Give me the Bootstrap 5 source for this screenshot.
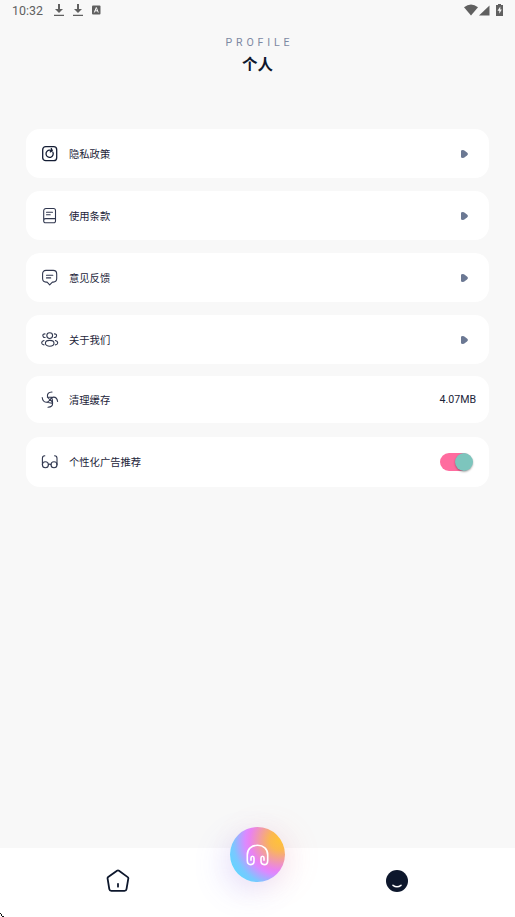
<!DOCTYPE html>
<html lang="zh-CN">
<head>
<meta charset="utf-8">
<meta name="viewport" content="width=device-width, initial-scale=1">
<title>个人</title>
<link href="https://cdn.jsdelivr.net/npm/bootstrap@5.3.0/dist/css/bootstrap.min.css" rel="stylesheet">
<style>
body{background:#f8f8f8;color:#0d172c;font-family:Roboto,"Noto Sans CJK SC",sans-serif;height:917px;overflow:hidden}
svg{display:block;flex:none}
.line-icon{width:18px;height:18px;fill:none;stroke:#30374f;stroke-width:1.1;stroke-linecap:round;stroke-linejoin:round;margin-right:10px}
.line-icon.strong{stroke:#141d34;stroke-width:1.3}
.status-bar{height:22px;padding:0 11px 2px 12px;color:#606060}
.glyph-gap{margin-left:9px}
.battery{margin:0 1px 0 6px}
.signal{margin-left:1px}
.clock{font-size:12.4px;line-height:20px;width:42px;letter-spacing:.05px;padding-top:1px}
.page-head{height:107px;padding-top:14px}
.eyebrow{font-size:10.6px;line-height:13px;letter-spacing:3.85px;color:#7d89a3;padding-left:4px}
.page-title{font-size:15.5px;line-height:22px;font-weight:700;margin-top:5px}
.setting{height:49px;border-radius:14px;background:#fff;padding:0 13px 0 15px;font-size:10.3px;color:#1c2439}
.setting-label{padding-top:2px}
.ads-row .setting-label{padding-top:1px}
.setting-list{padding:0 26px;gap:13px}
.cache-row{height:47px;margin-top:-1px}
.ads-row{height:50px;margin-top:1px}
.arrow{width:7px;height:8px;margin:0 8px 0 0;fill:#6b7893}
.size{font-size:10.6px;padding-top:1px}
.toggle-track{width:32px;height:18px;border-radius:9px;background:#ff6c9f;margin-right:4px}
.toggle-knob{width:18px;height:18px;border-radius:50%;background:#7dc5bd;box-shadow:0 1px 2px #0005;margin-right:-1px}
.tab-bar{height:69px;background:#fff;padding:0 48px 3px}
.play-tab{width:55px;height:55px;margin-top:-53px;border-radius:50%;background:radial-gradient(circle at 90% 24%,#ffc238 0,#fbb850 15%,#e982f0 46%,#db8aff 53%,#79c8ff 72%,#63d5ff 84%);box-shadow:-8px 10px 30px #7b78ff2b,8px 3px 30px #ff8b8b25}
.corner{left:0;bottom:0}
</style>
<script src="https://cdn.jsdelivr.net/npm/bootstrap@5.3.0/dist/js/bootstrap.bundle.min.js"></script>
</head>
<body class="d-flex flex-column position-relative">
<div class="status-bar d-flex align-items-center flex-shrink-0">
  <span class="clock">10:32</span>
  <svg width="10" height="12" viewBox="0 0 10 12" fill="#606060"><path d="M4 0h2v5h3L5 9 1 5h3zM0 10.700h10V12H0z"/></svg>
  <svg class="glyph-gap" width="10" height="12" viewBox="0 0 10 12" fill="#606060"><path d="M4 0h2v5h3L5 9 1 5h3zM0 10.700h10V12H0z"/></svg>
  <svg class="glyph-gap" width="10" height="10" viewBox="0 0 10 10"><rect x="0" y=".5" width="8.500" height="9" rx="1" fill="#606060"/><path d="M2.300 7.500 4.300 2.500l2 5M2.900 5.800h2.800" fill="none" stroke="#f8f8f8"/></svg>
  <svg class="ms-auto" width="14" height="12" viewBox="0 0 14 12"><path d="M0 3.200Q7-2.300 14 3.200L7 11.500z" fill="#606060"/></svg>
  <svg class="signal" width="11" height="11" viewBox="0 0 11 11"><path d="M10.500.5v10H0z" fill="#606060"/></svg>
  <svg class="battery" width="7" height="12" viewBox="0 0 7 12"><path d="M2 0h3v1h2v11H0V1h2z" fill="#606060"/><path d="M4.300 2.500 1.500 6.800h1.800v3l2.500-4.200H4.300z" fill="#f8f8f8"/></svg>
</div>
<header class="page-head text-center flex-shrink-0">
  <div class="eyebrow">PROFILE</div>
  <h1 class="page-title mb-0">个人</h1>
</header>
<main class="setting-list d-flex flex-column flex-grow-1">
  <div class="setting d-flex align-items-center">
    <svg class="line-icon strong" viewBox="0 0 18 18"><rect x="1.700" y="1.700" width="14" height="14" rx="3"/><path d="M11.900 7.300a3.600 3.600 0 1 1-3.200-2.100l2.300.3M10.300 3.500l1 2.200-2 1.200"/></svg>
    <span class="setting-label flex-grow-1">隐私政策</span>
    <svg class="arrow" viewBox="0 0 7 8"><path d="M0 1Q0 0 1.700 0L3 .2 6 2.500Q7.800 4 6 5.500L3 7.800 1.700 8Q0 8 0 7z"/></svg>
  </div>
  <div class="setting d-flex align-items-center">
    <svg class="line-icon" viewBox="0 0 18 18"><path d="M5 1.500h7.500a2 2 0 0 1 2 2V14a1.800 1.800 0 0 1-1.800 1.800H4.500A1.800 1.800 0 0 1 2.700 14V3.800A2.300 2.300 0 0 1 5 1.500zM2.700 13.500q0-1.900 2-1.900h9.800M5.500 5.200h6M5.500 7.800h3.700"/></svg>
    <span class="setting-label flex-grow-1">使用条款</span>
    <svg class="arrow" viewBox="0 0 7 8"><path d="M0 1Q0 0 1.700 0L3 .2 6 2.500Q7.800 4 6 5.500L3 7.800 1.700 8Q0 8 0 7z"/></svg>
  </div>
  <div class="setting d-flex align-items-center">
    <svg class="line-icon" viewBox="0 0 18 18"><path d="M5 1.400h7.200q3.500 0 3.500 3.500v4.700q0 3.500-3.500 3.500h-.8L8.700 15.800l-2.600-2.700H5q-3.400 0-3.400-3.500V4.900q0-3.500 3.400-3.500zM5.500 6.200h6.300M5.500 8.900h4.200"/></svg>
    <span class="setting-label flex-grow-1">意见反馈</span>
    <svg class="arrow" viewBox="0 0 7 8"><path d="M0 1Q0 0 1.700 0L3 .2 6 2.500Q7.800 4 6 5.500L3 7.800 1.700 8Q0 8 0 7z"/></svg>
  </div>
  <div class="setting d-flex align-items-center">
    <svg class="line-icon" viewBox="0 0 18 18"><circle cx="8.700" cy="4.600" r="2.900"/><ellipse cx="8.700" cy="12.300" rx="4.300" ry="2.900"/><path d="M4 2.900q-2.400 0-2.100 1.900t2.300 1.700M13.400 2.900q2.400 0 2.100 1.900t-2.300 1.700M3 9.500q-2.500.8-2.300 2.500.1 1.500 2.300 1.900M14.400 9.500q2.500.8 2.300 2.500-.1 1.500-2.300 1.900"/></svg>
    <span class="setting-label flex-grow-1">关于我们</span>
    <svg class="arrow" viewBox="0 0 7 8"><path d="M0 1Q0 0 1.700 0L3 .2 6 2.500Q7.800 4 6 5.500L3 7.800 1.700 8Q0 8 0 7z"/></svg>
  </div>
  <div class="setting cache-row d-flex align-items-center">
    <svg class="line-icon" viewBox="0 0 18 18"><path d="M11 1Q6.200 1.300 6.400 5.200 6.600 7.200 9 8.700M16.600 10.500Q16 6 12.500 6.100 10.300 6.300 9 8.700M7 16.300q4.800-.3 4.600-4Q11.400 10.200 9 8.700M1.200 6.500q.6 4.600 4 4.700Q7.600 11.100 9 8.700M6.400 6.300l6.100-.2M11.600 11.800l-.5-5M6 11.200l5 1"/></svg>
    <span class="setting-label flex-grow-1">清理缓存</span>
    <span class="size">4.07MB</span>
  </div>
  <div class="setting ads-row d-flex align-items-center">
    <svg class="line-icon" viewBox="0 0 18 18"><circle cx="4.400" cy="11.800" r="3"/><circle cx="13" cy="11.800" r="3"/><path d="M1.400 11.800V5.200Q1.400 3 3.800 2.800M16 11.800V5.200Q16 3 13.600 2.800M7.400 11.600q1.300-.9 2.600 0"/></svg>
    <span class="setting-label flex-grow-1">个性化广告推荐</span>
    <div class="toggle-track d-flex justify-content-end" role="switch" aria-checked="true"><div class="toggle-knob"></div></div>
  </div>
</main>
<nav class="tab-bar row g-0 align-items-center flex-shrink-0">
  <div class="col-4 d-flex justify-content-center"><svg width="24" height="24" viewBox="0 0 24 24" fill="none" stroke="#0d172c" stroke-width="1.800" stroke-linecap="round" stroke-linejoin="round"><path d="m11 1.700-8.800 6.400q-.8.6-.6 1.600l1.700 10.400q.3 1.700 2 1.700h13.200q1.800 0 2-1.700l1.800-10.400q.2-1-.6-1.600L13 1.700q-1-.7-2 0zM12 14.800v2.900"/></svg></div>
  <div class="col-4 d-flex justify-content-center"><div class="play-tab d-flex align-items-center justify-content-center"><svg width="23" height="22" viewBox="0 0 23 22" fill="none" stroke="#fff" stroke-width="1.600" stroke-linecap="round"><path d="M5 16.200v-2.300q0-1.700 1.500-1.700T8 13.900v3.200q0 3.500-3.200 3.500-3.500 0-3.500-4.200v-5.500C1.300 5 5.500 1.300 11.500 1.300S21.700 5 21.700 10.900v5.500q0 4.200-3.500 4.200-3.200 0-3.200-3.500v-3.200q0-1.700 1.500-1.700t1.500 1.700v2.300"/></svg></div></div>
  <div class="col-4 d-flex justify-content-center"><svg width="22" height="22" viewBox="0 0 22 22"><circle cx="11" cy="11" r="11" fill="#0d172c"/><path d="M7 15.300q4 3 8 0" fill="none" stroke="#fff" stroke-width="1.500" stroke-linecap="round"/></svg></div>
</nav>
<svg class="corner position-absolute" width="4" height="4" viewBox="0 0 4 4"><path d="M0 0h1v1h1v2h2v1H2V3H1V1H0z" fill="#111"/></svg>
</body>
</html>
